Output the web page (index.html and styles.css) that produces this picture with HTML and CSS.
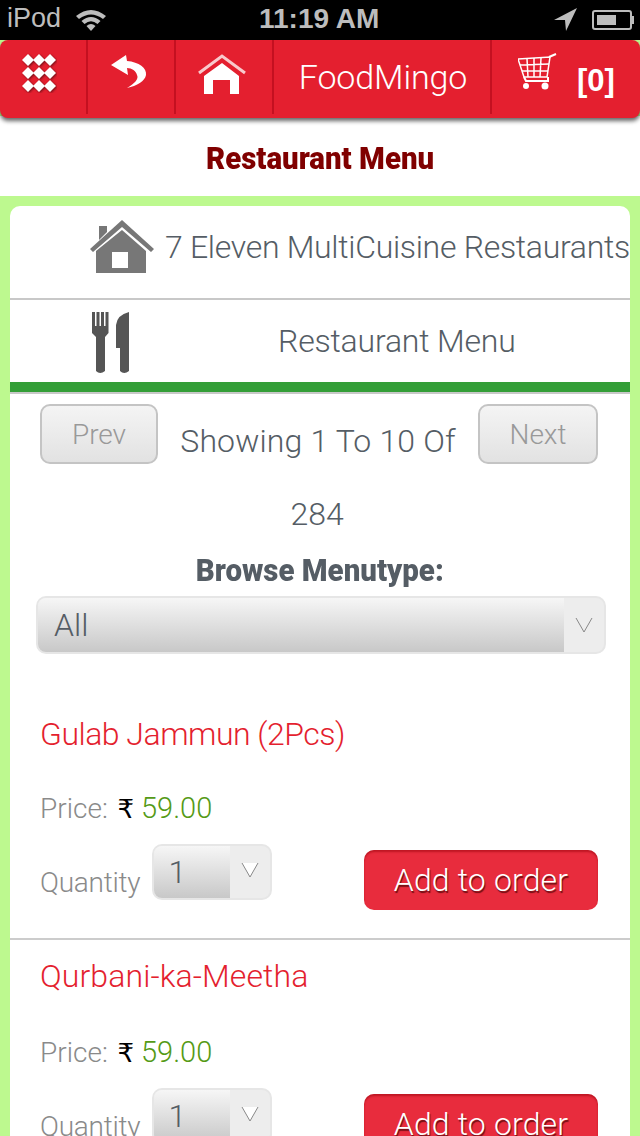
FILE: index.html
```html
<!DOCTYPE html>
<html lang="en">
<head>
    <meta charset="UTF-8">
    <meta name="viewport" content="width=device-width, initial-scale=1.0">
    <title>FoodMingo</title>
    <link rel="stylesheet" href="styles.css">
</head>
<body>

    <div class="status-bar">
        <div class="status-left">
            <span>iPod</span>
            <svg class="wifi" width="32" height="24" viewBox="0 0 32 24">
                <path d="M1 9 Q16 -3 31 9 L28 12 Q16 3 4 12 Z" fill="#bdbdbd"/>
                <path d="M6.500 14 Q16 6 25.500 14 L22.500 17 Q16 11.500 9.500 17 Z" fill="#bdbdbd"/>
                <path d="M11.500 19 Q16 15 20.500 19 L16 24 Z" fill="#bdbdbd"/>
            </svg>
        </div>
        <span class="status-time">11:19 AM</span>
        <div class="status-right">
            <svg width="24" height="24" viewBox="0 0 24 24"><path d="M0 12 L23 0 L12 23 L11 12 Z" fill="#bdbdbd"/></svg>
            <div class="battery"><div class="battery-level"></div></div>
            <div class="battery-tip"></div>
        </div>
    </div>

    <div class="nav">
        <div class="nav-item nav-grid">
            <svg width="36" height="40" viewBox="0 0 36 40">
                <g fill="#fff" class="nav-icon">
                    <path d="M7 1 L13 7 L7 13 L1 7 Z"/><path d="M18 1 L24 7 L18 13 L12 7 Z"/><path d="M29 1 L35 7 L29 13 L23 7 Z"/>
                    <path d="M7 14 L13 20 L7 26 L1 20 Z"/><path d="M18 14 L24 20 L18 26 L12 20 Z"/><path d="M29 14 L35 20 L29 26 L23 20 Z"/>
                    <path d="M7 27 L13 33 L7 39 L1 33 Z"/><path d="M18 27 L24 33 L18 39 L12 33 Z"/><path d="M29 27 L35 33 L29 39 L23 33 Z"/>
                </g>
            </svg>
        </div>
        <div class="nav-item nav-back">
            <svg width="36" height="34" viewBox="0 0 36 34">
                <path d="M0 10 L15 0 L16 6 C28 7 36 13 35 20 C34 26 26 31 16 33 C24 28 28 24 26 20 C25 16 21 13 16 13 L17 20 Z" fill="#fff"/>
            </svg>
        </div>
        <div class="nav-item nav-home">
            <svg width="48" height="42" viewBox="0 0 48 42">
                <path d="M1 19 L24 2 L47 19" fill="none" stroke="#f8c9cc" stroke-width="3"/>
                <path d="M24 9 L41 22 L41 40 L32 40 L32 26 L15 26 L15 40 L6 40 L6 22 Z" fill="#fff"/>
            </svg>
        </div>
        <div class="nav-item nav-title">FoodMingo</div>
        <div class="nav-item nav-cart">
            <svg class="cart-icon" width="40" height="38" viewBox="0 0 40 38">
                <g fill="none" stroke="#fff" stroke-width="1.500">
                    <path d="M0 6 L32 4 L29 24 L6 24 Z"/>
                    <path d="M2 12 L31 11 M4 18 L30 18 M9 6 L10 24 M16 5 L16 24 M23 5 L22 24"/>
                    <path d="M31 4 L38 1" stroke-width="2"/>
                    <path d="M6 24 L8 28 L30 28 L30 24" stroke-width="2"/>
                </g>
                <circle cx="8" cy="33" r="3" fill="#fff"/>
                <circle cx="27" cy="33" r="3.500" fill="#fff"/>
            </svg>
            <span class="cart-count">[0]</span>
        </div>
    </div>

    <div class="page-title"><span class="condensed">Restaurant Menu</span></div>

    <div class="content">
        <div class="card">
            <div class="info-row info-restaurant">
                <svg class="house-icon" width="66" height="56" viewBox="0 0 66 56">
                    <path d="M1 30 L33 1 L65 30 L62 33 L33 8 L4 33 Z" fill="#777"/>
                    <path d="M10 7 L18 7 L18 13 L10 21 Z" fill="#777"/>
                    <path d="M33 11 L57 32 L57 54 L7 54 L7 32 Z M23 33 L23 49 L39 49 L39 33 Z" fill="#777" fill-rule="evenodd"/>
                </svg>
                <span class="restaurant-name">7 Eleven MultiCuisine Restaurants</span>
            </div>
            <div class="info-row info-menu">
                <svg class="cutlery-icon" width="40" height="64" viewBox="0 0 40 64">
                    <path d="M1 1 h3 v14 h1.500 V1 h3 v14 h1.500 V1 h3 v14 h1.500 V1 h3 V22 L14 26 V60 Q9 64 5 60 V26 L1 22 Z" fill="#555"/>
                    <path d="M38 1 V60 Q33 64 29 60 V37 L25 37 V14 Q26 4 38 1 Z" fill="#555"/>
                </svg>
                <span class="info-menu-text">Restaurant Menu</span>
            </div>
            <div class="green-bar"></div>

            <div class="pager">
                <a class="pager-btn">Prev</a>
                <span class="pager-text">Showing 1 To 10 Of</span>
                <a class="pager-btn pager-next">Next</a>
            </div>
            <div class="pager-total">284</div>
            <div class="browse-label"><span class="condensed">Browse Menutype:</span></div>
            <div class="select select-type">
                <div class="select-value">All</div>
                <div class="select-arrow"><svg width="18" height="16" viewBox="0 0 18 16"><path d="M1 1 L9 15 L17 1" fill="none" stroke="#888" stroke-width="1"/></svg></div>
            </div>

            <div class="item item-first">
                <div class="item-name">Gulab Jammun (2Pcs)</div>
                <div class="item-price"><span class="price-label">Price:</span> <span class="rupee">₹</span> <span class="price-value">59.00</span></div>
                <div class="item-order">
                    <span class="qty-label">Quantity</span>
                    <div class="select select-qty">
                        <div class="select-value">1</div>
                        <div class="select-arrow"><svg width="18" height="16" viewBox="0 0 18 16"><path d="M1 1 L17 1 L9 15 Z" fill="#fff"/><path d="M1 1 L9 15 L17 1" fill="none" stroke="#888" stroke-width="1"/></svg></div>
                    </div>
                    <a class="add-btn">Add to order</a>
                </div>
            </div>

            <div class="item">
                <div class="item-name">Qurbani-ka-Meetha</div>
                <div class="item-price"><span class="price-label">Price:</span> <span class="rupee">₹</span> <span class="price-value">59.00</span></div>
                <div class="item-order">
                    <span class="qty-label">Quantity</span>
                    <div class="select select-qty">
                        <div class="select-value">1</div>
                        <div class="select-arrow"><svg width="18" height="16" viewBox="0 0 18 16"><path d="M1 1 L17 1 L9 15 Z" fill="#fff"/><path d="M1 1 L9 15 L17 1" fill="none" stroke="#888" stroke-width="1"/></svg></div>
                    </div>
                    <a class="add-btn">Add to order</a>
                </div>
            </div>
        </div>
    </div>

</body>
</html>
```

FILE: styles.css
```css
html, body {
    margin: 0;
    padding: 0;
    height: 1136px;
    overflow: hidden;
}

body {
    font-family: Roboto, "Liberation Sans", sans-serif;
    font-weight: 300;
    background-color: #bdf98f;
    color: #555d65;
}

svg {
    display: block;
    flex: none;
}

.condensed {
    display: inline-block;
    font-family: Roboto, sans-serif;
    font-weight: 900;
    transform: scaleX(0.92);
}

.status-bar {
    height: 40px;
    background-color: #000;
    color: #bdbdbd;
    display: flex;
    align-items: center;
    justify-content: space-between;
    position: relative;
    font-family: "Liberation Sans", sans-serif;
    font-weight: 700;
    font-size: 28px;
}

.status-left {
    display: flex;
    align-items: center;
    gap: 14px;
    padding-left: 7px;
    padding-bottom: 3px;
    font-weight: 400;
    font-size: 27px;
}

.status-time {
    position: absolute;
    left: 259px;
    top: 3px;
}

.status-right {
    display: flex;
    align-items: center;
    padding-right: 6px;
}

.battery {
    width: 40px;
    height: 20px;
    box-sizing: border-box;
    border: 2px solid #bdbdbd;
    border-radius: 3px;
    margin-left: 14px;
    padding: 3px;
}

.battery-level {
    width: 19px;
    height: 10px;
    background-color: #bdbdbd;
}

.battery-tip {
    width: 2px;
    height: 8px;
    background-color: #bdbdbd;
}

.nav {
    height: 78px;
    background-color: #e41f2f;
    border-radius: 8px;
    display: flex;
    box-shadow: 0 3px 4px rgba(0, 0, 0, 0.6);
    position: relative;
}

.nav-item {
    height: 74px;
    border-right: 2px solid #c41020;
    display: flex;
    align-items: center;
    justify-content: center;
    box-sizing: border-box;
    color: #fff;
    flex: none;
}

.nav-grid {
    width: 88px;
    padding-right: 8px;
    padding-bottom: 8px;
}

.nav-icon {
    filter: drop-shadow(1px 1px 1px rgba(0, 0, 0, 0.5));
}

.nav-back {
    width: 88px;
    padding-right: 4px;
    padding-bottom: 10px;
}

.nav-home {
    width: 98px;
    padding-right: 4px;
    padding-bottom: 4px;
}

.nav-title {
    width: 218px;
    padding-left: 2px;
    font-size: 34px;
    letter-spacing: -0.1px;
}

.nav-cart {
    width: 148px;
    border-right: none;
    justify-content: flex-start;
    padding-left: 26px;
    gap: 20px;
}

.cart-icon {
    margin-bottom: 10px;
}

.cart-count {
    font-family: "Liberation Sans", sans-serif;
    font-weight: 700;
    font-size: 31px;
    margin-top: 8px;
    margin-left: -1px;
}

.page-title {
    height: 80px;
    margin-top: -2px;
    background-color: #fff;
    color: #800000;
    text-align: center;
    line-height: 84px;
    font-size: 32px;
}

.content {
    padding: 10px 10px 0;
}

.card {
    background-color: #fff;
    border-radius: 10px 10px 0 0;
    height: 1000px;
}

.info-row {
    display: flex;
    align-items: center;
    font-size: 32px;
    white-space: nowrap;
    box-sizing: border-box;
}

.info-restaurant {
    height: 94px;
    padding-left: 79px;
    padding-bottom: 10px;
    gap: 10px;
    border-bottom: 2px solid #c8c8c8;
}

.restaurant-name {
    letter-spacing: -0.3px;
}

.info-menu {
    height: 82px;
    padding-left: 81px;
}

.cutlery-icon {
    margin-top: 4px;
}

.info-menu-text {
    margin-left: 147px;
    letter-spacing: -0.2px;
}

.green-bar {
    height: 10px;
    background-color: #339e37;
    border-bottom: 2px solid #c8c8c8;
}

.pager {
    display: flex;
    align-items: flex-start;
    justify-content: space-between;
    padding: 10px 32px 0 30px;
}

.pager-btn {
    width: 118px;
    height: 60px;
    box-sizing: border-box;
    border: 2px solid #c4c4c4;
    border-radius: 10px;
    background: linear-gradient(#f4f4f4, #e2e2e2);
    color: #999;
    text-align: center;
    line-height: 58px;
    font-size: 28px;
}

.pager-next {
    width: 120px;
}

.pager-text {
    font-size: 32px;
    line-height: 74px;
    letter-spacing: 0.15px;
}

.pager-total {
    text-align: center;
    font-size: 32px;
    line-height: 40px;
    margin-top: 16px;
    padding-right: 6px;
}

.browse-label {
    text-align: center;
    font-size: 32px;
    line-height: 36px;
    margin-top: 18px;
}

.select {
    display: flex;
    border: 2px solid #e6e6e6;
    border-radius: 10px;
    overflow: hidden;
    box-sizing: border-box;
    background-color: #ededed;
}

.select-value {
    flex: 1;
    background: linear-gradient(#f6f6f6, #c8c8c8);
    font-size: 32px;
}

.select-arrow {
    display: flex;
    align-items: center;
    justify-content: center;
}

.select-type {
    margin: 8px 24px 0 26px;
    height: 58px;
}

.select-type .select-value {
    line-height: 54px;
    padding-left: 16px;
}

.select-type .select-arrow {
    width: 40px;
}

.select-qty {
    width: 120px;
    height: 56px;
    margin-left: 12px;
}

.select-qty .select-value {
    line-height: 52px;
    padding-left: 14px;
}

.select-qty .select-arrow {
    width: 40px;
    padding-bottom: 4px;
    box-sizing: border-box;
}

.item {
    padding: 0 32px 0 30px;
    height: 244px;
    box-sizing: border-box;
    border-bottom: 2px solid #ccc;
}

.item-first {
    margin-top: 60px;
    height: 226px;
}

.item-name {
    color: #e41f2f;
    font-size: 32px;
    line-height: 40px;
    padding-top: 16px;
    letter-spacing: 0.1px;
}

.item-first .item-name {
    padding-top: 0;
    letter-spacing: -0.5px;
}

.item-price {
    font-size: 28px;
    line-height: 40px;
    margin-top: 36px;
    color: #8a8a8a;
}

.item-first .item-price {
    margin-top: 34px;
}

.rupee {
    font-family: "DejaVu Sans", sans-serif;
    color: #000;
    font-weight: 400;
    font-size: 26px;
    margin-left: 3px;
}

.price-value {
    color: #559a16;
    font-size: 29px;
}

.item-order {
    display: flex;
    align-items: flex-start;
    margin-top: 15px;
}

.qty-label {
    color: #8a8a8a;
    font-size: 28px;
    line-height: 40px;
    margin-top: 19px;
    letter-spacing: -0.25px;
}

.add-btn {
    margin-left: auto;
    margin-top: 6px;
    width: 234px;
    height: 60px;
    background-color: #e82c3d;
    border-radius: 10px;
    box-shadow: inset 0 2px 2px rgba(150, 0, 10, 0.5);
    color: #fff;
    text-align: center;
    line-height: 60px;
    font-size: 32px;
    letter-spacing: 0.15px;
    text-shadow: 1px 2px 1px rgba(60, 0, 0, 0.7);
}
```
